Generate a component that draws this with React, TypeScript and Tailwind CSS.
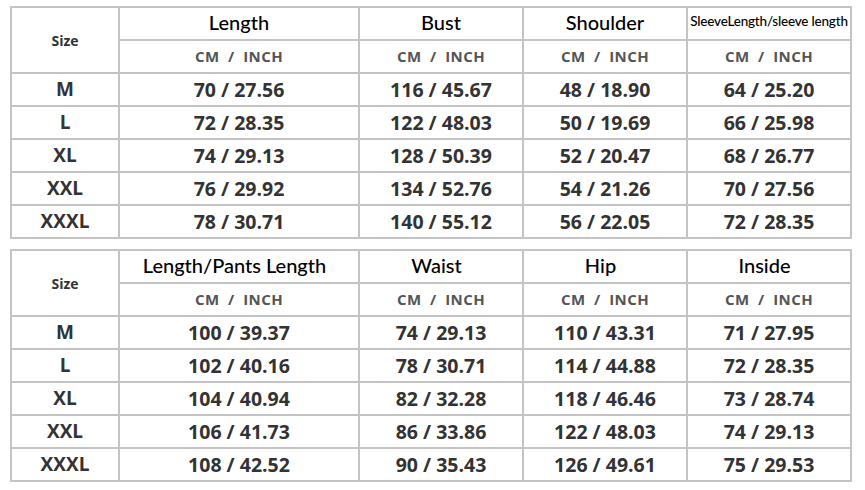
const top = {
  headers: ["Length", "Bust", "Shoulder", "SleeveLength/sleeve length"],
  shift: "",
  rows: [
    ["M", "70 / 27.56", "116 / 45.67", "48 / 18.90", "64 / 25.20"],
    ["L", "72 / 28.35", "122 / 48.03", "50 / 19.69", "66 / 25.98"],
    ["XL", "74 / 29.13", "128 / 50.39", "52 / 20.47", "68 / 26.77"],
    ["XXL", "76 / 29.92", "134 / 52.76", "54 / 21.26", "70 / 27.56"],
    ["XXXL", "78 / 30.71", "140 / 55.12", "56 / 22.05", "72 / 28.35"],
  ],
};

const bottom = {
  headers: ["Length/Pants Length", "Waist", "Hip", "Inside"],
  shift: "pr-[9px]",
  rows: [
    ["M", "100 / 39.37", "74 / 29.13", "110 / 43.31", "71 / 27.95"],
    ["L", "102 / 40.16", "78 / 30.71", "114 / 44.88", "72 / 28.35"],
    ["XL", "104 / 40.94", "82 / 32.28", "118 / 46.46", "73 / 28.74"],
    ["XXL", "106 / 41.73", "86 / 33.86", "122 / 48.03", "74 / 29.13"],
    ["XXXL", "108 / 42.52", "90 / 35.43", "126 / 49.61", "75 / 29.53"],
  ],
};

const cell = "border-2 border-[#c4c4c4] text-center p-0";

const SizeTable = ({
  headers,
  rows,
  shift,
}: {
  headers: string[];
  rows: string[][];
  shift: string;
}) => (
  <table className="table-fixed border-collapse w-[842px]">
    <colgroup>
      <col className="w-[108px]" />
      <col className="w-[240px]" />
      <col className="w-[164px]" />
      <col className="w-[164px]" />
      <col className="w-[164px]" />
    </colgroup>
    <tbody>
      <tr className="h-[33px]">
        <td
          rowSpan={2}
          className={`${cell} font-['Open_Sans',sans-serif] font-bold text-[14px] text-[#333]`}
        >
          Size
        </td>
        {headers.map((h) => (
          <td
            key={h}
            className={`${cell} ${shift} font-['Lato',sans-serif] font-medium text-black leading-none pb-[3px] ${
              h.startsWith("Sleeve") ? "text-[13.5px] tracking-[-0.2px]" : "text-[20px]"
            }`}
          >
            {h}
          </td>
        ))}
      </tr>
      <tr className="h-[33px]">
        {headers.map((h) => (
          <td
            key={h}
            className={`${cell} font-['Open_Sans',sans-serif] font-bold text-[15px] tracking-[0.4px] text-[#555] whitespace-pre`}
          >
            {"CM  /  INCH"}
          </td>
        ))}
      </tr>
      {rows.map((r) => (
        <tr key={r[0]} className="h-[33px]">
          {r.map((v, i) => (
            <td
              key={i}
              className={`${cell} font-['Open_Sans',sans-serif] font-bold text-[#333] ${
                i === 0 ? "text-[19px]" : "text-[19.5px]"
              }`}
            >
              {v}
            </td>
          ))}
        </tr>
      ))}
    </tbody>
  </table>
);

export default function App() {
  return (
    <div className="w-[865px] h-[490px] bg-white pt-[6px] pl-[10px] flex flex-col gap-[10px]">
      <SizeTable {...top} />
      <SizeTable {...bottom} />
    </div>
  );
}
